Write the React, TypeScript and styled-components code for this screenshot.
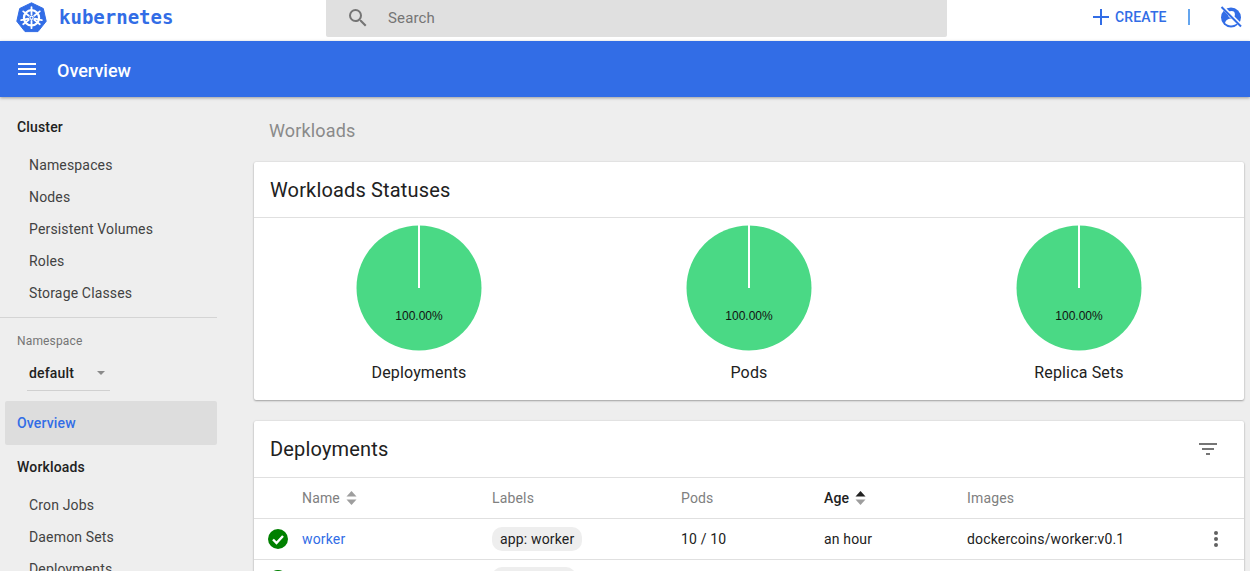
import React from 'react';
import styled, { createGlobalStyle } from 'styled-components';

const Global = createGlobalStyle`
  html, body { margin: 0; padding: 0; height: 571px; overflow: hidden; background: #eeeeee; }
  body { font-family: Roboto, "Liberation Sans", sans-serif; color: #212121; letter-spacing: .01em; }
  * { box-sizing: border-box; }
`;

const Page = styled.div`
  width: 1250px; height: 571px; overflow: hidden; display: flex; flex-direction: column; position: relative;
`;
const TopBar = styled.header`
  height: 41px; background: #fff; display: flex; align-items: flex-start; flex: none;
`;
const Brand = styled.div`
  width: 326px; height: 34px; display: flex; align-items: center; padding-left: 16px; gap: 12px;
`;
const BrandName = styled.span`
  font-family: "DejaVu Sans Mono", monospace; font-size: 19px; font-weight: 700; color: #326de6; letter-spacing: 0;
`;
const Search = styled.div`
  width: 621px; height: 37px; background: #e0e0e0; border-radius: 0 0 2px 2px; display: flex; align-items: center;
  padding: 0 0 2px 20px; gap: 18px; color: #757575; font-size: 15px;
`;
const TopActions = styled.div`
  flex: 1; height: 34px; display: flex; align-items: center; padding-left: 145px;
`;
const Create = styled.span`
  display: flex; align-items: center; gap: 5px; color: #326de6; font-size: 14px; font-weight: 500;
`;
const VBar = styled.span`
  width: 2px; height: 16px; background: #64a5ee; margin: 0 30px 0 21px;
`;
const BlueBar = styled.div`
  height: 56px; background: #326de6; display: flex; align-items: center; padding-left: 15px; gap: 18px; color: #fff;
  font-size: 18px; font-weight: 500; flex: none; box-shadow: 0 1px 3px rgba(0,0,0,.35); z-index: 2; letter-spacing: 0;
`;
const BarTitle = styled.span`
  padding-top: 2px;
`;
const Body = styled.div`
  flex: 1; display: flex; min-height: 0;
`;
const Side = styled.nav`
  width: 254px; flex: none; padding-top: 19px; font-size: 14px;
`;
const SideHead = styled.div`
  height: 22px; line-height: 22px; padding-left: 17px; font-weight: 500; color: #212121; margin-bottom: 11px;
`;
const SideItem = styled.div`
  height: 32px; line-height: 32px; padding-left: 29px; color: #424242;
`;
const SideRule = styled.hr`
  width: 217px; height: 1px; background: #d4d4d4; border: 0; margin: 8px 0 0;
`;
const NsLabel = styled.div`
  font-size: 12px; color: #757575; padding-left: 17px; margin-top: 15px; line-height: 16px;
`;
const NsSelect = styled.div`
  width: 83px; height: 34px; margin: 8px 0 10px 27px; padding: 0 2px 2px; border-bottom: 1px solid #d0d0d0;
  display: flex; align-items: center; justify-content: space-between; font-weight: 500; color: #212121;
`;
const Caret = styled.span`
  width: 0; height: 0; border-left: 4px solid transparent; border-right: 4px solid transparent;
  border-top: 4px solid #8a8a8a; margin-right: 3px; margin-top: 1px;
`;
const Active = styled.div`
  width: 212px; height: 44px; margin-left: 5px; padding-left: 12px; line-height: 44px; background: #dddddd;
  border-radius: 2px; color: #326de6; font-weight: 500; margin-bottom: 11px;
`;
const Main = styled.main`
  width: 990px; flex: none;
`;
const PageTitle = styled.h2`
  margin: 0; padding: 23px 0 0 15px; height: 65px; font-size: 18px; line-height: 21px; font-weight: 400; color: #8a8a8a;
`;
const Card = styled.section`
  background: #fff; box-shadow: 0 1px 2px rgba(0,0,0,.3), 0 0 2px rgba(0,0,0,.12); border-radius: 2px; margin-bottom: 21px;
`;
const CardHead = styled.div<{ $tall?: boolean }>`
  height: ${p => (p.$tall ? 57 : 56)}px; border-bottom: 1px solid #e0e0e0; display: flex; align-items: center; justify-content: space-between;
  padding: 0 24px 0 16px; font-size: 20px; color: #212121;
`;
const Charts = styled.div`
  height: 182px; display: grid; grid-template-columns: repeat(3, 330px);
`;
const Chart = styled.div`
  display: flex; flex-direction: column; align-items: center; padding-top: 7px; font-size: 16px; color: #212121;
`;
const ChartLabel = styled.div`
  margin-top: 12px; line-height: 20px;
`;
const Grid = styled.div`
  display: grid; grid-template-columns: 48px 190px 189px 143px 143px 1fr 43px; align-items: center;
  height: 41px; border-bottom: 1px solid #e0e0e0; font-size: 14px; color: #212121;
`;
const Th = styled.div<{ $dark?: boolean }>`
  display: flex; align-items: center; gap: 6px; color: ${p => (p.$dark ? '#212121' : '#808080')};
  font-weight: ${p => (p.$dark ? 500 : 400)};
`;
const StatusCell = styled.div`
  display: flex; padding-left: 14px;
`;
const Link = styled.span`
  color: #326de6;
`;
const Chip = styled.span<{ $blank?: boolean }>`
  display: inline-block; background: #eeeeee; border-radius: 10px; height: 24px; line-height: 24px; padding: 0 8px;
  width: ${p => (p.$blank ? '84px' : 'auto')};
`;
const Kebab = styled.div`
  display: flex; justify-content: center; padding-right: 14px;
`;

const Pie = () => (
  <svg width="126" height="126" viewBox="0 0 126 126">
    <circle cx="63" cy="63" r="62.5" fill="#4ad985" />
    <rect x="62" y="0" width="2" height="63" fill="#fff" />
    <text x="63" y="95" textAnchor="middle" fontSize="12" letterSpacing="0" fontFamily="'Liberation Sans', sans-serif" fill="#111">100.00%</text>
  </svg>
);

const Sort = ({ dark }: { dark?: boolean }) => (
  <svg width="11" height="16" viewBox="0 0 11 16">
    <path d="M5.5 1 L10.5 6.5 H.5Z" fill={dark ? '#212121' : '#9e9e9e'} />
    <path d="M5.5 15 L10.5 9.5 H.5Z" fill="#9e9e9e" />
  </svg>
);

const Logo = () => (
  <svg width="31" height="31" viewBox="0 0 31 31">
    <path d="M15.5 .8 L27.3 6.5 L30.2 19.3 L22 29.6 H9 L.8 19.3 L3.7 6.5Z" fill="#326de6" stroke="#326de6" strokeLinejoin="round" />
    <g stroke="#fff" fill="none" strokeWidth="1.8" strokeLinecap="round">
      <circle cx="15.5" cy="15.8" r="7.6" strokeWidth="2.2" />
      <circle cx="15.5" cy="15.8" r="1.6" strokeWidth="1.2" />
      <path d="M15.5 5.2V12.5M15.5 19V26.2M7.2 9.4L12.8 13.8M18.2 17.9L23.8 22.2M23.8 9.4L18.2 13.8M12.8 17.9L7.2 22.2M5.2 18.2L12.2 16.6M18.8 16.6L25.8 18.2" />
    </g>
  </svg>
);

const NoUser = () => (
  <svg width="22" height="22" viewBox="0 0 22 22">
    <circle cx="11" cy="11.5" r="10" fill="#326de6" />
    <circle cx="11.5" cy="8.5" r="3.4" fill="#fff" />
    <path d="M5 17c1-3.400 4-4.400 6.500-4.400S16.500 13.600 17.500 17c-1.700 1.600-4 2.500-6.500 2.500S6.700 18.600 5 17Z" fill="#fff" />
    <path d="M2.500 1 L21.500 20" stroke="#fff" strokeWidth="3.600" />
    <path d="M1.500 1 L21 20.500" stroke="#326de6" strokeWidth="2" />
  </svg>
);

const Check = () => (
  <svg width="20" height="20" viewBox="0 0 20 20">
    <circle cx="10" cy="10" r="10" fill="#008000" />
    <path d="M5 10.500 L8.500 14 L15 7" fill="none" stroke="#fff" strokeWidth="2.400" />
  </svg>
);

const rows = ['Namespaces', 'Nodes', 'Persistent Volumes', 'Roles', 'Storage Classes'];
const wl = ['Cron Jobs', 'Daemon Sets', 'Deployments'];

export default function App() {
  return (
    <Page>
      <Global />
      <TopBar>
        <Brand><Logo /><BrandName>kubernetes</BrandName></Brand>
        <Search>
          <svg width="24" height="24" viewBox="0 0 24 24" fill="#757575"><path d="M15.500 14h-.79l-.28-.27A6.470 6.470 0 0 0 16 9.500 6.500 6.500 0 1 0 9.500 16c1.610 0 3.090-.59 4.230-1.570l.27.28v.79l5 4.990L20.490 19l-4.990-5zm-6 0C7.010 14 5 11.990 5 9.500S7.010 5 9.500 5 14 7.010 14 9.500 11.990 14 9.500 14z"/></svg>
          <span>Search</span>
        </Search>
        <TopActions>
          <Create>
            <svg width="18" height="18" viewBox="0 0 18 18"><path d="M8 1h2v7h7v2h-7v7H8v-7H1V8h7z" fill="#326de6"/></svg>
            CREATE
          </Create>
          <VBar />
          <NoUser />
        </TopActions>
      </TopBar>
      <BlueBar>
        <svg width="24" height="24" viewBox="0 0 24 24" fill="#fff"><path d="M3 18h18v-2H3v2zm0-5h18v-2H3v2zm0-7v2h18V6H3z"/></svg>
        <BarTitle>Overview</BarTitle>
      </BlueBar>
      <Body>
        <Side>
          <SideHead>Cluster</SideHead>
          {rows.map(r => <SideItem key={r}>{r}</SideItem>)}
          <SideRule />
          <NsLabel>Namespace</NsLabel>
          <NsSelect>default<Caret /></NsSelect>
          <Active>Overview</Active>
          <SideHead>Workloads</SideHead>
          {wl.map(r => <SideItem key={r}>{r}</SideItem>)}
        </Side>
        <Main>
          <PageTitle>Workloads</PageTitle>
          <Card>
            <CardHead>Workloads Statuses</CardHead>
            <Charts>
              {['Deployments', 'Pods', 'Replica Sets'].map(n => (
                <Chart key={n}><Pie /><ChartLabel>{n}</ChartLabel></Chart>
              ))}
            </Charts>
          </Card>
          <Card>
            <CardHead $tall>
              Deployments
              <svg width="24" height="24" viewBox="0 0 24 24" fill="#757575"><path d="M10 18h4v-2h-4v2zM3 6v2h18V6H3zm3 7h12v-2H6v2z"/></svg>
            </CardHead>
            <Grid>
              <span />
              <Th>Name <Sort /></Th>
              <Th>Labels</Th>
              <Th>Pods</Th>
              <Th $dark>Age <Sort dark /></Th>
              <Th>Images</Th>
              <span />
            </Grid>
            <Grid>
              <StatusCell><Check /></StatusCell>
              <Link>worker</Link>
              <div><Chip>app: worker</Chip></div>
              <span>10 / 10</span>
              <span>an hour</span>
              <span>dockercoins/worker:v0.1</span>
              <Kebab>
                <svg width="4" height="16" viewBox="0 0 4 16" fill="#616161"><circle cx="2" cy="2" r="2"/><circle cx="2" cy="8" r="2"/><circle cx="2" cy="14" r="2"/></svg>
              </Kebab>
            </Grid>
            <Grid>
              <StatusCell><Check /></StatusCell>
              <span />
              <div><Chip $blank /></div>
            </Grid>
          </Card>
        </Main>
      </Body>
    </Page>
  );
}
